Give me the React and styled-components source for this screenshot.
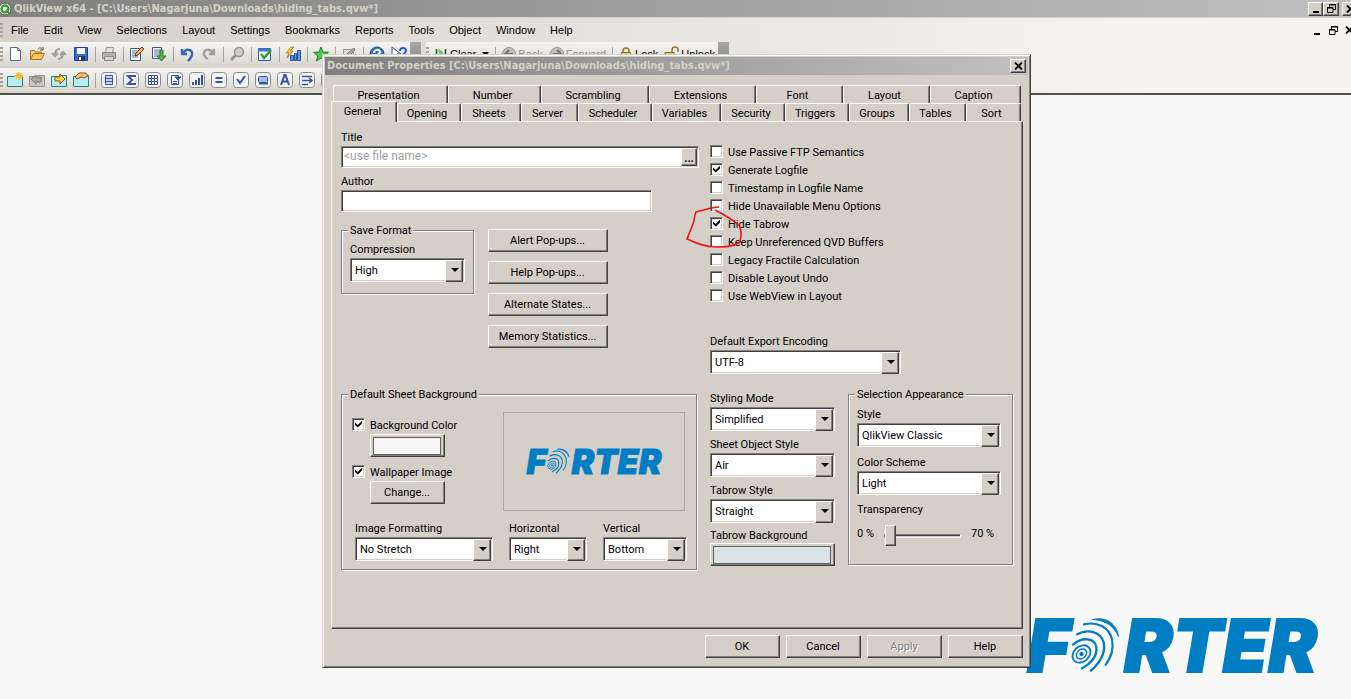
import { useState } from "react";
import styled, { createGlobalStyle, css } from "styled-components";

const GlobalStyle = createGlobalStyle`
  * {
    box-sizing: border-box;
  }
  body {
    margin: 0;
    background: #f8f8f8;
    overflow: hidden;
  }
  body, button, input, select {
    font-family: Roboto, "Liberation Sans", sans-serif;
    font-size: 11px;
    line-height: 14px;
    color: #000;
  }
`;

const raised = css`
  background: #d4d0c8;
  border: 1px solid;
  border-color: #fff #404040 #404040 #fff;
  box-shadow: inset -1px -1px #808080;
`;
const sunken = css`
  background: #fff;
  border: 1px solid;
  border-color: #808080 #fff #fff #808080;
  box-shadow: inset 1px 1px #404040, inset -1px -1px #d4d0c8;
`;

/* ---------- main window ---------- */
const AppWindow = styled.div`
  position: relative;
  min-height: 100vh;
  display: flex;
  flex-direction: column;
  overflow: hidden;
`;
const AppTitle = styled.header`
  display: flex;
  align-items: center;
  height: 17px;
  background: linear-gradient(90deg, #808080, #c0c0c0);
`;
const TitleText = styled.h1`
  flex: 1;
  margin: 0;
  font-family: "DejaVu Sans Condensed", "Noto Sans", sans-serif;
  font-size: 11px;
  font-weight: bold;
  color: #d4d0c8;
  white-space: nowrap;
`;
const AppIcon = styled.svg`
  width: 14px;
  height: 16px;
  flex: none;
`;
const WinButtons = styled.div`
  display: flex;
  flex: none;
  margin-right: -7px;
`;
const WinButton = styled.button`
  ${raised}
  width: ${(props) => (props.$wide ? 16 : 15)}px;
  height: 14px;
  padding: 0;
  display: flex;
  align-items: center;
  justify-content: center;
  margin-left: ${(props) => (props.$gap ? 3 : 0)}px;
`;
const Chrome = styled.div`
  border-top: 1px solid #d4d0c8;
  border-bottom: 2px solid #505050;
  background: linear-gradient(90deg, #d4d0c8, #f5f4f2 85%);
`;
const MenuBar = styled.nav`
  display: flex;
  align-items: center;
  height: 24px;
  gap: 1px;
`;
const MenuItem = styled.button`
  border: 0;
  background: none;
  padding: 0 7px;
  font-family: "Liberation Sans", Arial, sans-serif;
`;
const ChildButtons = styled.div`
  display: flex;
  gap: 6px;
  margin: 0 -4px 0 auto;
`;
const ChildButton = styled.button`
  border: 0;
  background: none;
  padding: 0;
  width: 10px;
  height: 14px;
  display: flex;
  align-items: center;
`;
const Grip = styled.i`
  width: 3px;
  height: 14px;
  flex: none;
  background: repeating-linear-gradient(#a5a29b 0 2px, transparent 2px 4px);
`;
const ToolRow = styled.div`
  display: flex;
  height: 24px;
  margin-bottom: 2px;
  &:last-child {
    margin-bottom: 1px;
  }
`;
const Toolbar = styled.div`
  display: flex;
  align-items: center;
  gap: 6px;
  padding-right: 3px;
  background: linear-gradient(#f6f5f3, #d9d6cf);
  ${Grip} {
    margin-right: -2px;
  }
`;
const ToolEnd = styled.i`
  width: 11px;
  margin-right: 5px;
  background: linear-gradient(#a8a8a8, #858585);
`;
const ToolSep = styled.i`
  width: 1px;
  height: 15px;
  margin-right: -1px;
  background: #a7a49d;
`;
const ToolButton = styled.button`
  display: flex;
  align-items: center;
  gap: 1px;
  border: 0;
  background: none;
  padding: 0;
  color: #000;
  font-family: "Liberation Sans", Arial, sans-serif;
  &:disabled {
    color: #8f8c86;
  }
`;
const Canvas = styled.main`
  flex: 1;
  display: flex;
  align-items: flex-end;
  justify-content: flex-end;
  padding: 0 34px 17px 0;
`;

/* ---------- dialog ---------- */
const Dialog = styled.section`
  position: absolute;
  left: 322px;
  top: 54px;
  width: 709px;
  padding: 2px;
  background: #d4d0c8;
  border: 1px solid;
  border-color: #d4d0c8 #404040 #404040 #d4d0c8;
  box-shadow: inset 1px 1px #fff, inset -1px -1px #808080;
`;
const DialogTitle = styled.header`
  display: flex;
  align-items: center;
  height: 18px;
  padding: 0 2px;
  background: linear-gradient(90deg, #808080, #c0c0c0);
`;
const DialogBody = styled.div`
  padding: 10px 5px 7px 6px;
`;
const TabRow = styled.div`
  display: grid;
  grid-template-columns: ${(props) => props.$cols};
  height: 18px;
  margin: 0 2px;
`;
const Tab = styled.button`
  border: 0;
  border-top: 1px solid #fff;
  border-left: 1px solid #fff;
  border-right: 1px solid #404040;
  border-radius: 2px 2px 0 0;
  box-shadow: inset -1px 0 #808080;
  background: #d4d0c8;
  padding: 2px 4px 0 0;
  ${(props) =>
    props.$active &&
    css`
      position: relative;
      z-index: 1;
      margin: -2px 0 -1px -2px;
      padding: 0 3px 0 0;
    `}
`;
const Panel = styled.div`
  display: grid;
  grid-template-columns: 358px 1fr;
  gap: 13px 11px;
  padding: 8px 9px 58px;
  border: 1px solid;
  border-color: #fff #404040 #404040 #fff;
  box-shadow: inset -1px -1px #808080;
`;
const Footer = styled.footer`
  display: flex;
  justify-content: flex-end;
  gap: 6px;
  padding-top: 6px;
`;
const Button = styled.button`
  ${raised}
  width: ${(props) => props.$width || 75}px;
  height: 23px;
  padding: 1px 1px 0 0;
  &:disabled {
    color: #808080;
    text-shadow: 1px 1px #fff;
  }
`;
const Stack = styled.div`
  display: flex;
  flex-direction: column;
  gap: ${(props) => props.$gap || 0}px;
  padding-top: ${(props) => props.$top || 0}px;
`;
const Row = styled.div`
  display: flex;
  align-items: flex-start;
  gap: ${(props) => props.$gap || 0}px;
`;
const Field = styled.label`
  display: flex;
  flex-direction: column;
  gap: 1px;
  padding-top: 1px;
  width: ${(props) => (props.$width ? props.$width + "px" : "auto")};
`;
const TextBox = styled.div`
  ${sunken}
  display: flex;
  height: 22px;
  padding: 1px;
`;
const TextInput = styled.input`
  flex: 1;
  min-width: 0;
  border: 0;
  outline: 0;
  padding: 0 0 3px 1px;
  background: none;
  font-size: 12px;
  &::placeholder {
    color: #a0a0a0;
  }
`;
const BrowseButton = styled.button`
  ${raised}
  width: 16px;
  padding: 3px 0 0;
  font-weight: bold;
`;
const SelectBox = styled.span`
  ${sunken}
  position: relative;
  display: block;
  height: 24px;
  padding: 1px;
  &::before {
    content: "";
    ${raised}
    position: absolute;
    right: 1px;
    top: 1px;
    width: 16px;
    height: 20px;
    pointer-events: none;
  }
  &::after {
    content: "";
    position: absolute;
    right: 5px;
    top: 9px;
    border: 4px solid transparent;
    border-top-color: #000;
    border-bottom: 0;
    pointer-events: none;
  }
`;
const NativeSelect = styled.select`
  appearance: none;
  width: 100%;
  height: 20px;
  border: 0;
  outline: 0;
  padding: 2px 18px 0 3px;
  background: none;
`;
const Group = styled.fieldset`
  min-width: 0;
  margin: 0;
  padding: ${(props) => props.$pad};
  border: 1px solid #808080;
  box-shadow: 1px 1px #fff, inset 1px 1px #fff;
  width: ${(props) => (props.$width ? props.$width + "px" : "auto")};
  flex: ${(props) => (props.$grow ? 1 : "none")};
`;
const Legend = styled.legend`
  padding: 1px 2px 0;
  margin-left: ${(props) => props.$shift || 0}px;
  height: 14px;
  background: #d4d0c8;
  white-space: nowrap;
`;
const CheckLabel = styled.label`
  display: flex;
  align-items: center;
  gap: 5px;
  height: ${(props) => props.$height || 18}px;
  padding-top: 2px;
`;
const CheckBox = styled.input`
  ${sunken}
  appearance: none;
  width: 13px;
  height: 13px;
  margin: 0 0 4px;
  flex: none;
  display: grid;
  place-items: center;
  &:checked::after {
    content: "";
    width: 7px;
    height: 7px;
    background: #000;
    clip-path: polygon(0 28%, 40% 64%, 100% 0, 100% 42%, 40% 100%, 0 66%);
  }
`;
const CheckList = styled.div`
  position: relative;
  padding-top: 13px;
  margin-bottom: 29px;
`;
const RedMark = styled.svg`
  position: absolute;
  left: -26px;
  top: 72px;
  width: 62px;
  height: 50px;
  pointer-events: none;
`;
const Swatch = styled.button`
  ${raised}
  display: block;
  width: ${(props) => props.$width}px;
  height: 23px;
  padding: 2px;
  &::before {
    content: "";
    display: block;
    height: 16px;
    margin-right: 1px;
    border: 1px solid #606060;
    background: ${(props) => props.$color};
  }
`;
const Indent = styled.div`
  padding: 1px 0 7px 18px;
`;
const Preview = styled.div`
  display: flex;
  align-items: center;
  justify-content: center;
  width: 182px;
  height: 99px;
  border: 1px solid #aca9a3;
`;
const SheetTop = styled.div`
  display: flex;
  justify-content: space-between;
  padding: 0 11px 10px 0;
`;
const SheetFields = styled.div`
  display: flex;
  padding-left: 3px;
  gap: 16px;
`;
const SliderRow = styled.div`
  display: flex;
  align-items: center;
  gap: 10px;
  height: 21px;
  padding-bottom: 4px;
  white-space: nowrap;
`;
const Slider = styled.input`
  appearance: none;
  width: 77px;
  height: 21px;
  margin: 4px 0 0;
  background: none;
  &::-webkit-slider-runnable-track {
    height: 4px;
    border: 1px solid;
    border-color: #808080 #fff #fff #808080;
    background: linear-gradient(#404040 50%, #d4d0c8 50%);
  }
  &::-webkit-slider-thumb {
    ${raised}
    appearance: none;
    width: 11px;
    height: 21px;
    margin-top: -10px;
  }
`;

/* ---------- logo ---------- */
const LogoBox = styled.div`
  display: flex;
  align-items: center;
  font-family: Inter, sans-serif;
  font-weight: 900;
  font-style: italic;
  font-size: ${(props) => props.$size}px;
  line-height: 1;
  color: #007dc3;
  -webkit-text-stroke: 0.025em #007dc3;
  svg {
    width: 0.68em;
    height: 0.77em;
    margin: 0 0.04em 0 0.02em;
  }
`;

const Logo = ({ size }) => (
  <LogoBox $size={size} aria-label="FORTER">
    <span>F</span>
    <svg viewBox="0 0 50 57" fill="none" stroke="#007dc3" strokeLinecap="round">
      <circle cx="10.500" cy="37.500" r="2.200" fill="#007dc3" stroke="none" />
      <ellipse cx="10.500" cy="37.500" rx="10" ry="7.800" transform="rotate(-42 10.500 37.500)" strokeWidth="1.800" />
      <ellipse cx="10.500" cy="37.500" rx="5.800" ry="4.400" transform="rotate(-42 10.500 37.500)" strokeWidth="1.500" />
      <path d="M2 28C11 20 24 21 25.500 30.500C27 40 19 48 11 52" strokeWidth="2.400" />
      <path d="M6 17.500C17 11.500 30 15 33 26C35.500 38 26 49 20 54.500" strokeWidth="2.400" />
      <path d="M13 7.500C27 4 39 11 41.500 23C43.500 34 40 42 35 48.500" strokeWidth="2.200" />
      <path d="M22 2.500C36-1 47 8 48 20C44 10 36 3.500 22 2.500z" fill="#007dc3" strokeWidth="1" />
    </svg>
    <span>RTER</span>
  </LogoBox>
);

/* ---------- toolbar icons ---------- */
const Icon = ({ children }) => (
  <svg width="16" height="16" viewBox="0 0 16 16" fill="none">
    {children}
  </svg>
);
const Framed = ({ children }) => (
  <Icon>
    <rect x="0.5" y="0.5" width="15" height="15" rx="3" fill="#f4f4f4" stroke="#8a8a8a" />
    <g stroke="#3352a4">{children}</g>
  </Icon>
);

const icons = {
  New: <path d="M3.5 1.5h7l3 3v10h-10zM10.500 1.500v3h3" fill="#fff" stroke="#5a6b85" />,
  Open: (
    <>
      <path d="M1.500 13.500v-9h4l1 1.500h6v2" fill="#f5cf78" stroke="#a8741a" />
      <path d="M1.500 13.500l3-6h11l-3 6z" fill="#fbc65c" stroke="#a8741a" />
      <path d="M9 3c2-2 4-1 5 1m0-3v3h-3" stroke="#555" />
    </>
  ),
  Refresh: (
    <g stroke="#a19e98" strokeWidth="2">
      <path d="M9 3C5 3 4 5 4 9M1 7l3 3 3-3" />
      <path d="M7 13c4 0 5-2 5-6M9 9l3-3 3 3" />
    </g>
  ),
  Save: (
    <>
      <path d="M1.500 1.500h13v13h-13z" fill="#3c6bd0" stroke="#21408c" />
      <path d="M4 2h8v6H4z" fill="#eef3ff" />
      <path d="M5 10h7v4H5z" fill="#20366f" />
      <path d="M6 11h2v3H6z" fill="#fff" />
    </>
  ),
  Print: (
    <>
      <path d="M4.500 7l1-5.500h7L11.500 7" fill="#e5e3df" stroke="#98958f" />
      <path d="M1.500 6.500h13v6h-13z" fill="#b5b2ac" stroke="#8d8a84" />
      <path d="M3.500 10.500h9v4h-9z" fill="#d6d4cf" stroke="#8d8a84" />
    </>
  ),
  EditScript: (
    <>
      <path d="M1.500 2.500h10v12h-10z" fill="#fff" stroke="#3f5a80" />
      <path d="M3 5h6M3 7h5M3 9h3M3 11h6" stroke="#4c70a8" />
      <path d="M6 10l1-3 6-6 2 2-6 6z" fill="#f3b253" stroke="#6b3b16" />
    </>
  ),
  Reload: (
    <>
      <path d="M1.500 1.500h9v11h-9z" fill="#fff" stroke="#3f5a80" />
      <path d="M3 4h6M3 6h6M3 8h6M3 10h6" stroke="#4c70a8" />
      <path d="M9 4h3v6h3l-4.500 5L6 10h3z" fill="#5bb44a" stroke="#2a7426" />
    </>
  ),
  Undo: <path d="M3 3v5h5M4 7c3-5 10-4 9 2-1 3-2 4-4 6" stroke="#3467ba" strokeWidth="2.4" />,
  Redo: <path d="M13 3v5H8M12 7C9 2 2 3 3 9c1 2 2 3 4 4" stroke="#a29f99" strokeWidth="2.4" />,
  Search: (
    <>
      <circle cx="10" cy="6" r="4.500" fill="#d0cec9" stroke="#98958f" strokeWidth="1.500" />
      <path d="M7 9l-5 5" stroke="#98958f" strokeWidth="3" />
    </>
  ),
  Selections: (
    <>
      <path d="M1.500 2.500h12v12h-12z" fill="#fff" stroke="#2f5fa8" />
      <path d="M2 4h11" stroke="#3e78c8" strokeWidth="3" />
      <path d="M4 8l3 4 7-8" stroke="#21a322" strokeWidth="2.400" />
    </>
  ),
  Chart: (
    <>
      <path d="M5.500 9.500h3v5h-3zM9.500 7.500h2v7h-2zM12.500 4.500h3v10h-3z" fill="#5f94e6" stroke="#2a54a6" />
      <path d="M6 1L1 7h3l-2 5 6-7H5l4-4z" fill="#ffc54a" stroke="#98641a" strokeWidth="0.700" />
    </>
  ),
  Favorite: (
    <path d="M8 1l2 5 5.500.300-4.300 3.400L12.700 15 8 12l-4.700 3 1.500-5.300L.500 6.300 6 6z" fill="#52c552" stroke="#247a2c" />
  ),
  Note: (
    <>
      <path d="M2.500 3.500h10v11h-10z" fill="#dddbd6" stroke="#98958f" />
      <path d="M5 11l1-3 7-6 1 2-6 6z" fill="#aaa" stroke="#77746f" />
    </>
  ),
  Help: (
    <>
      <circle cx="8" cy="8" r="7" fill="#2f6fd0" stroke="#1c4592" />
      <path d="M5 7c0-4 6-4 6-1 0 2-3 2-3 4v2" stroke="#fff" strokeWidth="2" />
    </>
  ),
  WhatsThis: (
    <>
      <path d="M1 1v10l3-3 2 5 2-1-2-4h4z" fill="#fff" stroke="#2c57a5" />
      <path d="M9 5c0-4 6-4 6 0 0 2-3 2-3 5" stroke="#2c5fc0" strokeWidth="2" />
    </>
  ),
};
const sheet = <path d="M.500 4.500h7l1-1h7v11H.500z" fill="#b9ecee" stroke="#2e7f84" />;
const sheetIcons = {
  AddSheet: (
    <>
      {sheet}
      <path d="M12 0v8M8 4h8M9 1l6 6M15 1L9 7" stroke="#f6bd26" strokeWidth="1.400" />
    </>
  ),
  Previous: (
    <>
      <path d="M.500 4.500h7l1-1h7v11H.500z" fill="#c9c6c0" stroke="#96938d" />
      <path d="M2 7l5-4v2h5v5H7v2z" fill="#aaa7a1" stroke="#7d7a75" />
    </>
  ),
  Next: (
    <>
      {sheet}
      <path d="M14 7L9 2v3H4v4h5v3z" fill="#ffd052" stroke="#8a5a12" />
    </>
  ),
  Properties: (
    <>
      {sheet}
      <path d="M2 5l4-4 7 0 2 3-4 2-3-1-4 2z" fill="#f2c37a" stroke="#80561e" />
    </>
  ),
};
const objectIcons = {
  "List Box": <path d="M4.500 3.500h7v9h-7zM5 6.500h6M5 9.500h6" fill="#c9d6f4" />,
  "Statistics Box": <path d="M12 5V4H5l4 4-4 4h7v-1" strokeWidth="2" />,
  "Table Box": <path d="M3.500 3.500h9v9h-9zM3.500 6.500h9M3.500 9.500h9M6.500 3.500v9M9.500 3.500v9" />,
  "Multi Box": (
    <>
      <path d="M4.500 3.500h7v9h-7zM6 9.500h4M6 11.500h4" />
      <path d="M8 5h6l-3 3z" fill="#3352a4" />
    </>
  ),
  "Chart Object": <path d="M4 10v3M7 8v5M10 6v7M13 3v10" strokeWidth="2" />,
  "Input Box": <path d="M4.500 6h7M4.500 10h7" strokeWidth="2" />,
  "Current Selections": <path d="M4 7l3 4 5-7" strokeWidth="2" />,
  "Button Object": (
    <>
      <rect x="3.500" y="4.500" width="9" height="6" rx="1" fill="#a9bdec" />
      <path d="M4 11.500h9" strokeWidth="2" />
    </>
  ),
  "Text Object": <path d="M4 13L7.500 3h1L12 13M5.500 9.500h5" strokeWidth="2" />,
  "Line Object": <path d="M3 4.500h10M3 8.500h10M3 12.500h6M10 6l3 2.500L10 11" strokeWidth="1.400" />,
  "Slider Object": <path d="M3 8h10M7 5v6" />,
};

const CloseGlyph = () => (
  <svg width="9" height="8" viewBox="0 0 9 8" stroke="#000" strokeWidth="1.800">
    <path d="M1 0.500l7 7M8 0.500l-7 7" />
  </svg>
);
const RestoreGlyph = () => (
  <svg width="9" height="9" viewBox="0 0 9 9" fill="none" stroke="#000">
    <path d="M2.500 3V.500h6v5H6M2 1h7M.500 3.500h5.500v5H.500zM0 4h6" />
  </svg>
);
const MinGlyph = () => (
  <svg width="8" height="9" viewBox="0 0 8 9">
    <path d="M1 7h6v2H1z" fill="#000" />
  </svg>
);
const ArrowCircle = ({ flip }) => (
  <Icon>
    <circle cx="8" cy="8" r="6.500" fill="#c4c1bb" stroke="#8f8c86" />
    <path d={flip ? "M4 8h7M8 4l4 4-4 4" : "M12 8H5M8 4L4 8l4 4"} stroke="#77746f" strokeWidth="2" />
  </Icon>
);
const LockIcon = ({ open }) => (
  <Icon>
    <path d={open ? "M8 8V4a3 3 0 016 0v2" : "M5 8V5a3 3 0 016 0v3"} stroke="#9a7531" strokeWidth="1.500" />
    <path d={open ? "M1 6.500h9v7H1z" : "M3.500 6.500h9v7h-9z"} fill="#f2c25b" stroke="#8c6622" />
  </Icon>
);

const menus = ["File", "Edit", "View", "Selections", "Layout", "Settings", "Bookmarks", "Reports", "Tools", "Object", "Window", "Help"];
const toolGroups = [
  ["New", "Open", "Refresh", "Save"],
  ["Print"],
  ["EditScript", "Reload"],
  ["Undo", "Redo"],
  ["Search"],
  ["Selections"],
  ["Chart"],
  ["Favorite"],
  ["Note"],
  ["Help", "WhatsThis"],
];
const tabRows = [
  {
    cols: "115fr 93fr 108fr 107fr 87fr 87fr 91fr",
    tabs: ["Presentation", "Number", "Scrambling", "Extensions", "Font", "Layout", "Caption"],
  },
  {
    cols: "64fr 64fr 60fr 57fr 74fr 69fr 64fr 64fr 60fr 57fr 55fr",
    tabs: ["General", "Opening", "Sheets", "Server", "Scheduler", "Variables", "Security", "Triggers", "Groups", "Tables", "Sort"],
  },
];
const settings = [
  ["Use Passive FTP Semantics", false],
  ["Generate Logfile", true],
  ["Timestamp in Logfile Name", false],
  ["Hide Unavailable Menu Options", false],
  ["Hide Tabrow", true],
  ["Keep Unreferenced QVD Buffers", false],
  ["Legacy Fractile Calculation", false],
  ["Disable Layout Undo", false],
  ["Use WebView in Layout", false],
];
const popups = ["Alert Pop-ups...", "Help Pop-ups...", "Alternate States...", "Memory Statistics..."];

const Select = ({ label, value, width }) => (
  <Field $width={width}>
    {label}
    <SelectBox>
      <NativeSelect defaultValue={value}>
        <option>{value}</option>
      </NativeSelect>
    </SelectBox>
  </Field>
);
const Check = ({ label, checked, height }) => (
  <CheckLabel $height={height}>
    <CheckBox type="checkbox" defaultChecked={checked} />
    {label}
  </CheckLabel>
);

const Toolbars = () => (
  <>
    <ToolRow>
      <Toolbar>
        <Grip />
        {toolGroups.map((group, i) => [
          i > 0 && <ToolSep key={"sep" + i} />,
          ...group.map((name) => (
            <ToolButton key={name} aria-label={name}>
              <Icon>{icons[name]}</Icon>
            </ToolButton>
          )),
        ])}
      </Toolbar>
      <ToolEnd />
      <Toolbar>
        <Grip />
        <ToolButton>
          <Icon>
            <path d="M3.500 3v10M6 4l4 9M12.500 3v10" stroke="#1c5f2c" strokeWidth="1.600" />
            <path d="M6 3l4 3v6L6 8z" fill="#6fca74" />
          </Icon>
          Clear
        </ToolButton>
        <svg width="7" height="4" viewBox="0 0 7 4">
          <path d="M0 0h7L3.500 4z" />
        </svg>
        <ToolSep />
        <ToolButton disabled>
          <ArrowCircle />
          Back
        </ToolButton>
        <ToolButton disabled>
          <ArrowCircle flip />
          Forward
        </ToolButton>
        <ToolSep />
        <ToolButton>
          <LockIcon />
          Lock
        </ToolButton>
        <ToolButton>
          <LockIcon open />
          Unlock
        </ToolButton>
      </Toolbar>
      <ToolEnd />
    </ToolRow>
    <ToolRow>
      <Toolbar>
        <Grip />
        {Object.keys(sheetIcons).map((name) => (
          <ToolButton key={name} aria-label={name}>
            <Icon>{sheetIcons[name]}</Icon>
          </ToolButton>
        ))}
        <ToolSep />
        {Object.keys(objectIcons).map((name) => (
          <ToolButton key={name} aria-label={name}>
            <Framed>{objectIcons[name]}</Framed>
          </ToolButton>
        ))}
      </Toolbar>
    </ToolRow>
  </>
);

const GeneralPage = () => (
  <Panel>
    <Stack>
      <Stack $gap={6}>
        <Field>
          Title
          <TextBox>
            <TextInput placeholder="<use file name>" />
            <BrowseButton>...</BrowseButton>
          </TextBox>
        </Field>
        <Field $width={311}>
          Author
          <TextBox>
            <TextInput />
          </TextBox>
        </Field>
      </Stack>
      <Stack $top={11}>
        <Row $gap={14}>
          <Group $width={133} $pad="5px 8px 11px">
            <Legend $shift={-2}>Save Format</Legend>
            <Select label="Compression" value="High" width={115} />
          </Group>
          <Stack $gap={9} $top={6}>
            {popups.map((text) => (
              <Button key={text} $width={120}>
                {text}
              </Button>
            ))}
          </Stack>
        </Row>
      </Stack>
    </Stack>

    <div>
      <CheckList>
        {settings.map(([label, checked]) => (
          <Check key={label} label={label} checked={checked} />
        ))}
        <RedMark viewBox="0 0 62 50" fill="none" stroke="#f21212" strokeWidth="1.600">
          <path d="M35 5c-7 0-14 3-23 5-2 4-1 7-3 12L3 37c9 4 18 8 28 8 9 0 18 0 25-5 2-6 1-14-1-17-5-4-16-11-24-15" />
        </RedMark>
      </CheckList>
      <Select label="Default Export Encoding" value="UTF-8" width={191} />
    </div>

    <Group $pad="11px 0 8px 10px" $width={356}>
      <Legend $shift={-4}>Default Sheet Background</Legend>
      <SheetTop>
        <Stack $top={5}>
          <Check label="Background Color" checked height={16} />
          <Indent>
            <Swatch $width={75} $color="#f8f8f8" aria-label="Background Color" />
          </Indent>
          <Check label="Wallpaper Image" checked height={16} />
          <Indent>
            <Button>Change...</Button>
          </Indent>
        </Stack>
        <Preview>
          <Logo size={34} />
        </Preview>
      </SheetTop>
      <SheetFields>
        <Select label="Image Formatting" value="No Stretch" width={138} />
        <Select label="Horizontal" value="Right" width={78} />
        <Select label="Vertical" value="Bottom" width={84} />
      </SheetFields>
    </Group>

    <Row $gap={13}>
      <Stack $gap={6} $top={4}>
        <Select label="Styling Mode" value="Simplified" width={125} />
        <Select label="Sheet Object Style" value="Air" width={125} />
        <Select label="Tabrow Style" value="Straight" width={125} />
        <div>
          Tabrow Background
          <Swatch $width={125} $color="#dce4e8" aria-label="Tabrow Background" />
        </div>
      </Stack>
      <Group $grow $pad="6px 8px 18px">
        <Legend $shift={-2}>Selection Appearance</Legend>
        <Stack $gap={8}>
          <Select label="Style" value="QlikView Classic" width={144} />
          <Select label="Color Scheme" value="Light" width={144} />
          <label htmlFor="transparency">Transparency</label>
          <SliderRow>
            0 %
            <Slider id="transparency" type="range" min="0" max="70" defaultValue="0" />
            70 %
          </SliderRow>
        </Stack>
      </Group>
    </Row>
  </Panel>
);

const PropertiesDialog = () => {
  const [tab, setTab] = useState("General");
  return (
    <Dialog role="dialog">
      <DialogTitle>
        <TitleText as="h2">Document Properties [C:\Users\Nagarjuna\Downloads\hiding_tabs.qvw*]</TitleText>
        <WinButton $wide aria-label="Close">
          <CloseGlyph />
        </WinButton>
      </DialogTitle>
      <DialogBody>
        {tabRows.map((row) => (
          <TabRow key={row.cols} $cols={row.cols}>
            {row.tabs.map((name) => (
              <Tab key={name} $active={name === tab} onClick={() => setTab(name)}>
                {name}
              </Tab>
            ))}
          </TabRow>
        ))}
        <GeneralPage />
        <Footer>
          <Button>OK</Button>
          <Button>Cancel</Button>
          <Button disabled>Apply</Button>
          <Button>Help</Button>
        </Footer>
      </DialogBody>
    </Dialog>
  );
};

const App = () => (
  <>
    <GlobalStyle />
    <AppWindow>
      <AppTitle>
        <AppIcon viewBox="0 0 14 16" fill="none">
          <circle cx="5" cy="8" r="6" fill="#fff" stroke="#555" />
          <circle cx="5" cy="8" r="3.500" stroke="#2fa12c" strokeWidth="2.400" />
          <path d="M6 9l4 4" stroke="#2fa12c" strokeWidth="2" />
        </AppIcon>
        <TitleText>QlikView x64 - [C:\Users\Nagarjuna\Downloads\hiding_tabs.qvw*]</TitleText>
        <WinButtons>
          <WinButton aria-label="Minimize">
            <MinGlyph />
          </WinButton>
          <WinButton $wide aria-label="Restore">
            <RestoreGlyph />
          </WinButton>
          <WinButton $wide $gap aria-label="Close">
            <CloseGlyph />
          </WinButton>
        </WinButtons>
      </AppTitle>
      <Chrome>
        <MenuBar>
          <Grip />
          {menus.map((name) => (
            <MenuItem key={name}>{name}</MenuItem>
          ))}
          <ChildButtons>
            <ChildButton aria-label="Minimize document">
              <MinGlyph />
            </ChildButton>
            <ChildButton aria-label="Restore document">
              <RestoreGlyph />
            </ChildButton>
            <ChildButton aria-label="Close document">
              <CloseGlyph />
            </ChildButton>
          </ChildButtons>
        </MenuBar>
        <Toolbars />
      </Chrome>
      <Canvas>
        <Logo size={73} />
      </Canvas>
      <PropertiesDialog />
    </AppWindow>
  </>
);
export default App;
